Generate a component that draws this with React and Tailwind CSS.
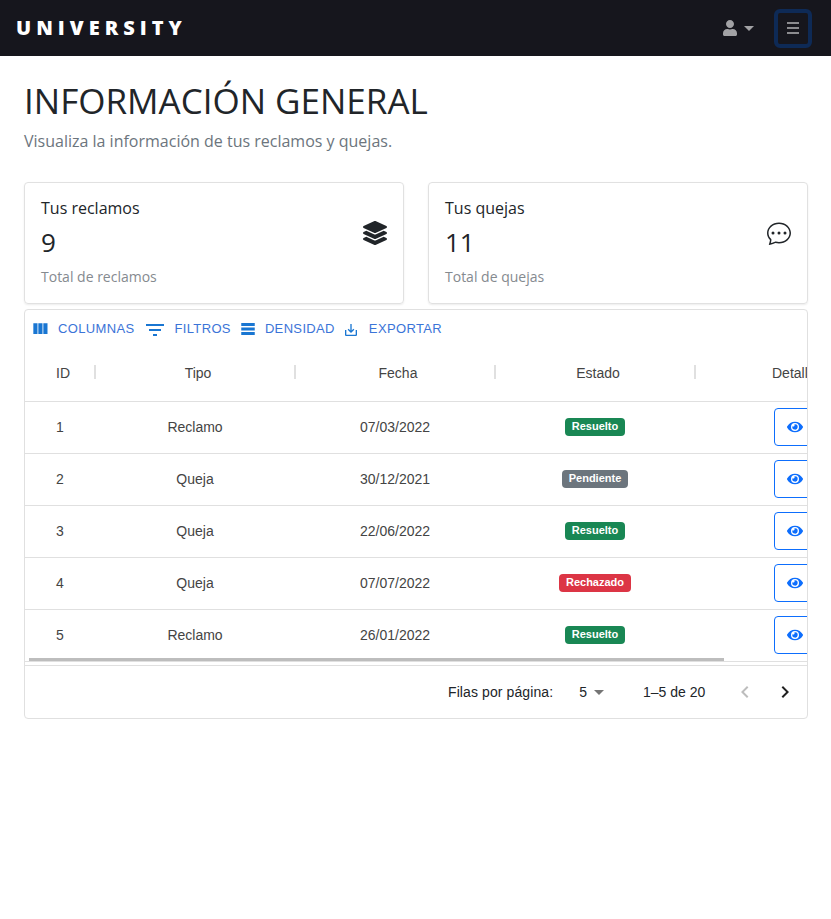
import { FaLayerGroup, FaUser, FaEye } from 'react-icons/fa';
import { BsChatDots } from 'react-icons/bs';

const rows = [
  { id: 1, tipo: 'Reclamo', fecha: '07/03/2022', estado: 'Resuelto' },
  { id: 2, tipo: 'Queja', fecha: '30/12/2021', estado: 'Pendiente' },
  { id: 3, tipo: 'Queja', fecha: '22/06/2022', estado: 'Resuelto' },
  { id: 4, tipo: 'Queja', fecha: '07/07/2022', estado: 'Rechazado' },
  { id: 5, tipo: 'Reclamo', fecha: '26/01/2022', estado: 'Resuelto' },
];

const badgeColors = {
  Resuelto: 'bg-[#198754]',
  Pendiente: 'bg-[#6c757d]',
  Rechazado: 'bg-[#dc3545]',
};

function MuiIcon({ d, className }) {
  return (
    <svg viewBox="0 0 24 24" fill="currentColor" className={className}>
      <path d={d} />
    </svg>
  );
}

// ─── Barra superior ───────────────────────────────────────
function Navbar() {
  return (
    <nav className="h-14 bg-[#16161d] flex items-center justify-between pl-4 pr-[19px]">
      <span className="font-['Open_Sans',sans-serif] font-extrabold text-white text-[20px] tracking-[5px] leading-none">
        UNIVERSITY
      </span>
      <div className="flex items-center">
        <div className="flex items-center text-[#a2a2a5] mr-[20px]">
          <FaUser className="w-[14px] h-[16px]" />
          <span className="ml-[7px] w-0 h-0 border-x-[5px] border-x-transparent border-t-[5px] border-t-[#a2a2a5]" />
        </div>
        <button className="w-[38px] h-[39px] rounded-[6px] border-[4px] border-[#0e2a56] flex flex-col items-center justify-center gap-[3px]">
          <span className="block w-3 h-[2px] bg-[#8b8b8f]" />
          <span className="block w-3 h-[2px] bg-[#8b8b8f]" />
          <span className="block w-3 h-[2px] bg-[#8b8b8f]" />
        </button>
      </div>
    </nav>
  );
}

function StatCard({ title, value, caption, icon }) {
  return (
    <div className="flex-1 h-[122px] rounded-[4px] border border-[#e1e1e1] shadow-[0_1px_2px_rgba(0,0,0,0.08)] pl-4 pr-4 pt-[14px] flex items-center justify-between font-['Open_Sans',sans-serif]">
      <div className="self-start">
        <p className="text-[16px] leading-[22px] text-[#212529]">{title}</p>
        <p className="text-[26px] leading-[36px] mt-[5px] text-[#212529]">{value}</p>
        <p className="text-[14px] leading-[20px] mt-[7px] text-[#858a8f]">{caption}</p>
      </div>
      <div className="mb-[34px] text-[#212529]">{icon}</div>
    </div>
  );
}

function ToolButton({ d, label, iconClass, gap }) {
  return (
    <div className={`flex items-center ${gap}`}>
      <MuiIcon d={d} className={iconClass} />
      <span className="text-[13px] leading-none text-[#3b74d8] tracking-[0.35px]">{label}</span>
    </div>
  );
}

function HeaderCell({ width, label }) {
  return (
    <div className={`${width} relative text-center pl-[6px]`}>
      {label}
      <span className="absolute right-[-1px] top-[2px] w-[2px] h-[14px] bg-[#e0e0e0]" />
    </div>
  );
}

// ─── Tabla de reclamos y quejas ───────────────────────────
function DataTable() {
  return (
    <div className="mt-[5px] h-[410px] rounded-[4px] border border-[#e0e0e0] font-['Liberation_Sans',sans-serif] overflow-hidden">
      <div className="h-[37px] pl-[5px] flex items-center gap-[8px] text-[#1976d2]">
        <ToolButton gap="gap-[8px]" iconClass="w-[20px] h-[20px]" label="COLUMNAS" d="M10 18h5V5h-5v13zm-6 0h5V5H4v13zM16 5v13h5V5h-5z" />
        <ToolButton gap="gap-[8px]" iconClass="w-[24px] h-[24px] ml-[1px] mt-[3px] -mr-[1px]" label="FILTROS" d="M10 18h4v-2h-4v2zM3 6v2h18V6H3zm3 7h12v-2H6v2z" />
        <ToolButton gap="gap-[8px]" iconClass="w-[18px] h-[18px]" label="DENSIDAD" d="M21 8H3V4h18v4zm0 2H3v4h18v-4zm0 6H3v4h18v-4z" />
        <ToolButton gap="gap-[10px]" iconClass="w-[16px] h-[16px] mt-[2px]" label="EXPORTAR" d="M19 12v7H5v-7H3v7c0 1.1.9 2 2 2h14c1.1 0 2-.9 2-2v-7h-2zm-6 .67l2.59-2.58L17 11.5l-5 5-5-5 1.41-1.41L11 12.67V3h2z" />
      </div>

      <div className="relative overflow-hidden">
        <div className="w-[820px] h-[55px] pb-[2px] flex items-center text-[14px] text-[#444444] border-b border-[#e0e0e0]">
          <HeaderCell width="w-[70px]" label="ID" />
          <HeaderCell width="w-[200px]" label="Tipo" />
          <HeaderCell width="w-[200px]" label="Fecha" />
          <HeaderCell width="w-[200px]" label="Estado" />
          <div className="w-[150px] pl-[77px]">Detalles</div>
        </div>

        {rows.map((row) => (
          <div key={row.id} className="w-[820px] h-[52px] flex items-center text-[14px] text-[#444444] border-b border-[#e0e0e0]">
            <div className="w-[70px] text-center">{row.id}</div>
            <div className="w-[200px] text-center">{row.tipo}</div>
            <div className="w-[200px] text-center">{row.fecha}</div>
            <div className="w-[200px] flex justify-center">
              <span className={`${badgeColors[row.estado]} mb-[2px] text-white text-[11px] leading-none font-bold rounded-[4px] px-[7px] py-[3.5px]`}>
                {row.estado}
              </span>
            </div>
            <div className="w-[150px] pl-[79px]">
              <button className="w-[42px] h-[38px] mb-[2px] rounded-[4px] border border-[#0d6efd] text-[#0d6efd] flex items-center justify-center">
                <FaEye className="w-4 h-4" />
              </button>
            </div>
          </div>
        ))}

        {/* Barra de scroll horizontal */}
        <div className="absolute left-[4px] bottom-[1px] w-[695px] h-[3px] bg-[#bdbdbd]" />
      </div>

      <div className="mt-[3px] h-[53px] border-t border-[#e0e0e0] flex items-center text-[14px] text-[#212529]">
        <span className="ml-[423px] tracking-[0.1px]">Filas por página:</span>
        <span className="ml-[26px]">5</span>
        <span className="ml-[7px] mt-[1px] w-0 h-0 border-x-[5px] border-x-transparent border-t-[5px] border-t-[#757575]" />
        <span className="ml-[39px]">1–5 de 20</span>
        <svg viewBox="0 0 24 24" className="ml-[28px] w-6 h-6 text-[#bdbdbd]" fill="currentColor">
          <path d="M15.41 7.41 14 6l-6 6 6 6 1.41-1.41L10.83 12z" />
        </svg>
        <svg viewBox="0 0 24 24" className="ml-[16px] w-6 h-6 text-[#212121]" fill="currentColor">
          <path d="M10 6 8.59 7.41 13.17 12l-4.58 4.59L10 18l6-6z" />
        </svg>
      </div>
    </div>
  );
}

export default function App() {
  return (
    <div className="min-h-[919px] bg-white">
      <Navbar />
      <main className="pl-6 pr-[23px] pt-[22px]">
        <h1 className="font-['Open_Sans',sans-serif] text-[35px] leading-[46px] text-[#212529]">INFORMACIÓN GENERAL</h1>
        <p className="font-['Open_Sans',sans-serif] text-[16px] leading-[24px] mt-[5px] text-[#6c757d]">
          Visualiza la información de tus reclamos y quejas.
        </p>
        <div className="mt-[29px] flex gap-6">
          <StatCard title="Tus reclamos" value="9" caption="Total de reclamos" icon={<FaLayerGroup className="w-6 h-6" />} />
          <StatCard title="Tus quejas" value="11" caption="Total de quejas" icon={<BsChatDots className="w-6 h-6" />} />
        </div>
        <DataTable />
      </main>
    </div>
  );
}
